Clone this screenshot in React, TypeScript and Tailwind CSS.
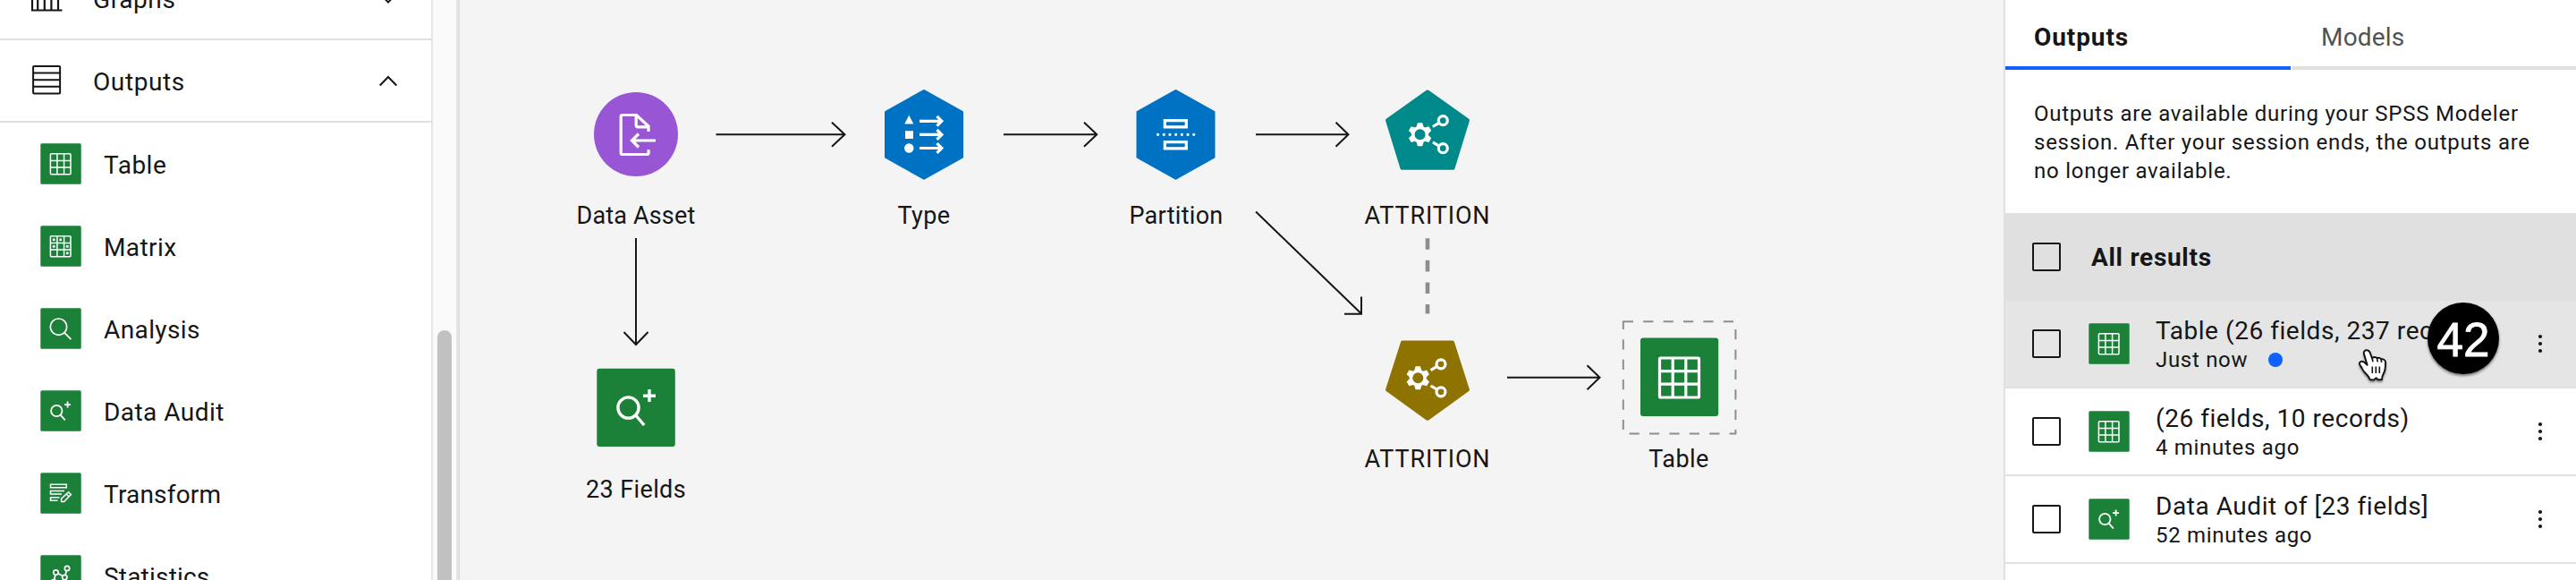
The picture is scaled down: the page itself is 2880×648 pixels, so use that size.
import React from "react";

type IconProps = { className?: string; children?: React.ReactNode };

const GREEN = "#1b8038";

function TableGlyph() {
  return (
    <g fill="none" stroke="#fff" strokeWidth="1.5">
      <rect x="11.4" y="11.8" width="22.6" height="23" rx="1" />
      <path d="M18.9 11.8v23M26.6 11.8v23M11.4 19.5H34M11.4 27.1H34" />
    </g>
  );
}
function MatrixGlyph() {
  return (
    <>
      <TableGlyph />
      <g fill="#fff">
        <circle cx="15.2" cy="15.7" r="1.5" />
        <circle cx="22.7" cy="15.7" r="1.5" />
        <circle cx="15.2" cy="23.3" r="1.5" />
        <circle cx="30.3" cy="23.3" r="1.5" />
        <circle cx="30.3" cy="30.8" r="1.5" />
      </g>
    </>
  );
}
function SearchGlyph() {
  return (
    <g fill="none" stroke="#fff" strokeWidth="1.7">
      <circle cx="20.5" cy="21.2" r="9.2" />
      <path d="M27.2 27.8l7.2 7.4" />
    </g>
  );
}
function AuditGlyph() {
  return (
    <g fill="none" stroke="#fff" strokeWidth="1.8">
      <circle cx="18.3" cy="23" r="6.2" />
      <path d="M22.6 27.6l5.2 5.8M30.6 12.6v7M27 16.2h7" />
    </g>
  );
}
function TransformGlyph() {
  return (
    <g fill="none" stroke="#fff" strokeWidth="1.5">
      <path d="M11.5 13.3h17.800v3.500H11.500zM27 20.600H11.500v3.400h12.500M21.500 27.700h-10v3.600h8" />
      <path d="M23.600 32.600v-3.400l8-7.400 2.800 2.800-7.800 8z" />
      <path d="M29.200 24l2.800 2.800" />
    </g>
  );
}
function StatsGlyph() {
  return (
    <g fill="none" stroke="#fff" strokeWidth="1.7">
      <circle cx="30" cy="15" r="2.7" />
      <circle cx="17.5" cy="19.600" r="2.700" />
      <circle cx="27.300" cy="25" r="2.700" />
      <circle cx="15" cy="30.200" r="2.700" />
      <path d="M20 20.800l5 2.700M29.300 17.700l-1.200 4.600M16.900 22.300l-1.200 5.200" />
    </g>
  );
}

function Tile({ className = "", children }: IconProps) {
  return (
    <svg className={`h-[46px] w-[46px] shrink-0 ${className}`} viewBox="0 0 46 46">
      <rect x="0.3" y="0.2" width="45.4" height="45.6" rx="1.5" fill={GREEN} />
      {children}
    </svg>
  );
}

const palette = [
  { name: "Table", glyph: <TableGlyph />, track: "tracking-[0.5px]" },
  { name: "Matrix", glyph: <MatrixGlyph />, track: "tracking-[0.4px]" },
  { name: "Analysis", glyph: <SearchGlyph />, track: "tracking-[0.4px]" },
  { name: "Data Audit", glyph: <AuditGlyph />, track: "tracking-[0.45px]" },
  { name: "Transform", glyph: <TransformGlyph />, track: "tracking-[0.2px]" },
  { name: "Statistics", glyph: <StatsGlyph />, track: "tracking-[0.2px]" },
];

function Sidebar() {
  return (
    <aside className="flex h-full w-[514px] shrink-0 overflow-hidden">
      <div className="flex w-[482px] shrink-0 flex-col bg-white">
        <div className="flex h-[45px] shrink-0 items-end border-b-2 border-[#e0e0e0]">
          <div className="flex h-[90px] w-full shrink-0 items-center pl-[34px]">
            <svg className="h-[36px] w-[36px]" viewBox="0 0 36 36" fill="none" stroke="#161616" strokeWidth="2.200">
              <path d="M2 0v31.500h33.500M8.200 31V6M15.800 31V6M23.400 31V6M31 31V6" />
            </svg>
            <span className="ml-[34px] flex-1 pt-[4px] text-[28px] tracking-[0.6px]">Graphs</span>
            <svg className="mr-[38px] h-[20px] w-[20px]" viewBox="0 0 20 20" fill="none" stroke="#161616" strokeWidth="2">
              <path d="M0.700 5l9.300 9.500 9.300-9.500" />
            </svg>
          </div>
        </div>
        <div className="flex h-[92px] shrink-0 items-center border-b-2 border-[#e0e0e0] pl-[34px]">
          <svg className="h-[36px] w-[36px]" viewBox="0 0 36 36" fill="none" stroke="#161616" strokeWidth="2">
            <rect x="3.100" y="2" width="30" height="30.500" rx="1" />
            <path d="M3 9.500h30M3 17.200h30M3 24.700h30" />
          </svg>
          <span className="ml-[34px] flex-1 pt-[4px] text-[28px] tracking-[0.6px]">Outputs</span>
          <svg className="mr-[38px] h-[20px] w-[20px]" viewBox="0 0 20 20" fill="none" stroke="#161616" strokeWidth="2">
            <path d="M0.700 15.500L10 6l9.300 9.500" />
          </svg>
        </div>
        {palette.map((p) => (
          <div key={p.name} className="flex h-[92px] shrink-0 items-center pl-[45px]">
            <Tile>{p.glyph}</Tile>
            <span className={`ml-[25px] pt-[4px] text-[28px] ${p.track}`}>{p.name}</span>
          </div>
        ))}
      </div>
      <div className="flex flex-1 justify-center border-r-2 border-l-2 border-[#e6e6e6] bg-[#fafafa] pt-[369px]">
        <div className="h-[400px] w-[16px] rounded-full bg-[#c1c1c1]" />
      </div>
      <div className="w-[2px] bg-[#dfdfdf]" />
    </aside>
  );
}

/* Gear with two linked circles, centred on 0,0 */
function ModelGlyph() {
  const teeth = [0, 60, 120, 180, 240, 300];
  return (
    <g fill="none" stroke="#fff">
      <circle cx="-8" cy="0" r="7.800" strokeWidth="3.600" />
      {teeth.map((a) => (
        <path key={a} d="M-4 -8.400L-2.700 -13H2.700L4 -8.400z" transform={`translate(-8 0) rotate(${a})`} fill="#fff" stroke="none" />
      ))}
      <circle cx="17.700" cy="-15.500" r="5" strokeWidth="3.200" />
      <circle cx="17.700" cy="15.500" r="5" strokeWidth="3.200" />
      <path d="M13.200 -12.900L6.300 -8.700M13.200 12.900L6.300 8.700" strokeWidth="3.200" />
    </g>
  );
}

function Links() {
  return (
    <svg className="absolute inset-0 h-full w-full" viewBox="514 0 1726 648" fill="none" stroke="#161616" strokeWidth="2">
      <path d="M800.5 150.3H944M930 136.800l14.500 13.500-14.500 13.500" />
      <path d="M1122 150.300H1226M1212 136.800l14.300 13.500-14.300 13.500" />
      <path d="M1404 150.300H1507.500M1493.500 136.800l14 13.500-14 13.500" />
      <path d="M711 266v119M697.500 371l13.500 14 13.500-14" />
      <path d="M1404 236.500L1522 350.500M1522 331.500v19.200h-19" />
      <path d="M1685 421.700h104M1774.500 408.200l14 13.500-14 13.500" />
      <path d="M1596 266.200v84.300" stroke="#8d8d8d" strokeWidth="4.600" strokeDasharray="12.600 12" />
      <rect x="1814.800" y="359.300" width="125.600" height="125.200" stroke="#8d8d8d" strokeDasharray="11.200 11.200" />

      <g stroke="none">
        <circle cx="711" cy="150" r="47" fill="#9855d4" />
        <g fill="none" stroke="#fff" strokeWidth="3.200">
          <path d="M725 147v-6l-13.500-12.500h-15.500a1.800 1.800 0 0 0-1.800 1.800v40.400a1.800 1.800 0 0 0 1.800 1.800h27.300a1.800 1.800 0 0 0 1.800-1.800v-3.500" />
          <path d="M711.200 128.500v11.300a2 2 0 0 0 2 2h11.800M733 157h-26M714 149.500l-7.500 7.500 7.500 7.500" />
        </g>

        <path d="M1033 101.500L1075.500 125.300V175.500L1033 199.300L990.500 175.500V125.300z" fill="#0072c3" stroke="#0072c3" strokeWidth="3" strokeLinejoin="round" />
        <g fill="#fff">
          <path d="M1016.300 128.800l5 9.700h-10zM1012 146.200h9v8.800h-9z" />
          <circle cx="1016.300" cy="165.500" r="5.200" />
        </g>
        <g stroke="#fff" strokeWidth="3.200" fill="none">
          <path d="M1028 135.300h25M1047.500 129.900l5.400 5.400-5.400 5.400M1028 150.400h25M1047.500 145l5.400 5.400-5.400 5.400M1028 165.500h25M1047.500 160.100l5.400 5.400-5.400 5.400" />
        </g>

        <path d="M1314.500 101.500L1357 125.300V175.500L1314.500 199.300L1272 175.500V125.300z" fill="#0072c3" stroke="#0072c3" strokeWidth="3" strokeLinejoin="round" />
        <g stroke="#fff" strokeWidth="3.200" fill="none">
          <path d="M1302.300 134.700h24v7.200h-24zM1302.300 158.700h24v7.200h-24z" />
          <path d="M1294.500 150.300h41" strokeLinecap="round" strokeDasharray="0.100 6.600" />
        </g>

        <path d="M1596 102.500L1641 134.500L1624.500 187.800H1567.500L1551 134.500z" fill="#00898a" stroke="#00898a" strokeWidth="4" strokeLinejoin="round" />
        <g transform="translate(1595.600 150.200)"><ModelGlyph /></g>

        <path d="M1596 467.800L1641 435.500L1624 382.500H1568L1551 435.500z" fill="#8e7300" stroke="#8e7300" strokeWidth="4" strokeLinejoin="round" />
        <g transform="translate(1593.300 422.300)"><ModelGlyph /></g>

        <rect x="667.300" y="411.700" width="87.500" height="87.300" rx="3" fill={GREEN} />
        <g fill="none" stroke="#fff" strokeWidth="3.400">
          <circle cx="702.500" cy="455.500" r="11.600" />
          <path d="M710.800 464l9.400 11M726 435v14M719 442.200h14" />
        </g>

        <rect x="1834" y="377.600" width="87.200" height="87.400" rx="3" fill={GREEN} />
        <g fill="none" stroke="#fff" strokeWidth="3.200">
          <rect x="1855.500" y="400" width="44" height="44" rx="1" />
          <path d="M1870.200 400v44M1884.800 400v44M1855.500 414.600h44M1855.500 429.200h44" />
        </g>
      </g>
    </svg>
  );
}

/* Labels sit on the free canvas, centred on their node */
const labels = [
  { text: "Data Asset", pos: "left-[47px] top-[223px]", track: "tracking-[0.15px]" },
  { text: "Type", pos: "left-[369px] top-[223px]", track: "tracking-[0.4px]" },
  { text: "Partition", pos: "left-[651px] top-[223px]", track: "tracking-[0.3px]" },
  { text: "ATTRITION", pos: "left-[932px] top-[223px]", track: "tracking-[0.85px]" },
  { text: "23 Fields", pos: "left-[47px] top-[529px]", track: "tracking-[0.4px]" },
  { text: "ATTRITION", pos: "left-[932px] top-[495px]", track: "tracking-[0.85px]" },
  { text: "Table", pos: "left-[1213px] top-[495px]", track: "tracking-[0.4px]" },
];

function Canvas() {
  return (
    <main className="relative h-full w-[1726px] shrink-0 bg-[#f4f4f4]">
      <Links />
      {labels.map((l, i) => (
        <div key={i} className={`absolute w-[300px] text-center text-[27px] leading-[36px] ${l.pos} ${l.track}`}>
          {l.text}
        </div>
      ))}
    </main>
  );
}

function Checkbox() {
  return <div className="h-[32px] w-[32px] shrink-0 rounded-[2px] border-2 border-[#161616]" />;
}

function Dots() {
  return (
    <svg className="mr-[37px] h-[24px] w-[6px] shrink-0" viewBox="0 0 6 24" fill="#161616">
      <circle cx="3" cy="4" r="2.100" />
      <circle cx="3" cy="12" r="2.100" />
      <circle cx="3" cy="20" r="2.100" />
    </svg>
  );
}

const results = [
  { title: "Table (26 fields, 237 records)", time: "Just now", glyph: <TableGlyph />, fresh: true, bg: "bg-[#e5e5e5]" },
  { title: "(26 fields, 10 records)", time: "4 minutes ago", glyph: <TableGlyph />, fresh: false, bg: "bg-white" },
  { title: "Data Audit of [23 fields]", time: "52 minutes ago", glyph: <AuditGlyph />, fresh: false, bg: "bg-white" },
];

function OutputsPanel() {
  return (
    <section className="relative flex h-full w-[640px] shrink-0 flex-col border-l-2 border-[#e0e0e0] bg-white">
      <div className="flex h-[78px] shrink-0 gap-[2px]">
        <div className="flex w-[319px] items-center border-b-4 border-[#0f62fe] pt-[10px] pl-[32px] text-[28px] font-bold tracking-[0.9px]">
          Outputs
        </div>
        <div className="flex flex-1 items-center border-b-4 border-[#e0e0e0] pt-[10px] pl-[32px] text-[28px] tracking-[0.2px] text-[#525252]">
          Models
        </div>
      </div>
      <p className="h-[160px] shrink-0 pt-[33px] pl-[32px] text-[24px] leading-[32px] tracking-[0.75px]">
        Outputs are available during your SPSS Modeler
        <br />
        session. After your session ends, the outputs are
        <br />
        no longer available.
      </p>
      <div className="flex h-[98px] shrink-0 items-center bg-[#e0e0e0] pl-[30px]">
        <Checkbox />
        <span className="ml-[34px] pt-[2px] text-[28px] font-bold tracking-[0.7px]">All results</span>
      </div>
      {results.map((r) => (
        <div key={r.title} className={`flex h-[98px] shrink-0 items-center border-b-2 border-[#e0e0e0] pl-[30px] ${r.bg}`}>
          <Checkbox />
          <Tile className="ml-[31px]">{r.glyph}</Tile>
          <div className="ml-[29px] flex flex-1 flex-col pt-[2px] whitespace-nowrap">
            <span className="text-[28px] leading-[34px] tracking-[0.55px]">{r.title}</span>
            <span className="flex items-center text-[24px] leading-[31px] tracking-[0.7px]">
              {r.time}
              {r.fresh && <i className="ml-[23px] h-[16px] w-[16px] rounded-full bg-[#0f62fe]" />}
            </span>
          </div>
          <Dots />
        </div>
      ))}
      <div className="absolute top-[338px] left-[472px] flex h-[80px] w-[80px] items-center justify-center rounded-full bg-black pt-[2px] font-['Liberation_Sans',Arial,sans-serif] text-[53px] leading-none text-white shadow-[0_2px_3px_rgba(0,0,0,0.5)] [-webkit-text-stroke:0.8px_white]">
        42
      </div>
      <svg className="absolute top-[388px] left-[393px] h-[42px] w-[38px] drop-shadow-[0_2px_1px_rgba(0,0,0,0.4)]" viewBox="0 0 38 42">
        <path
          d="M10.500 3.300C8.400 3.600 7.400 5.300 8 7.500L11.600 19.800L8.600 17C6 14.600 2.400 16 3 18.800C3.600 20.600 5.200 22 6 24C7.200 27 9.500 28.800 11.500 31C13 32.700 14 34 14.600 36L18.800 36.600L21.500 34.300L23.600 36.300L28 36C28 33 28.600 31.300 30.200 28.500C32.200 25 32 20 32 16.500C31.800 14 29 12.600 27.200 13.500C26.600 11.700 24 11.200 22.600 12.300C21.600 10.700 18.600 10.500 17 12.200L14.600 5.600C13.800 3.800 12.400 3 10.500 3.300Z"
          fill="#fff"
          stroke="#111"
          strokeWidth="1.900"
          strokeLinejoin="round"
        />
        <path d="M17.300 21.500v7.500M21.300 21.500v7.500M25.300 21.500v7.500M17 12.200l1 4M22.600 12.300l.6 4M27.200 13.500l.3 3.500" stroke="#111" strokeWidth="1.600" />
      </svg>
    </section>
  );
}

export default function App() {
  return (
    <div className="flex h-[648px] w-[2880px] overflow-hidden bg-white font-['Roboto','Liberation_Sans',sans-serif] text-[#161616]">
      <Sidebar />
      <Canvas />
      <OutputsPanel />
    </div>
  );
}
